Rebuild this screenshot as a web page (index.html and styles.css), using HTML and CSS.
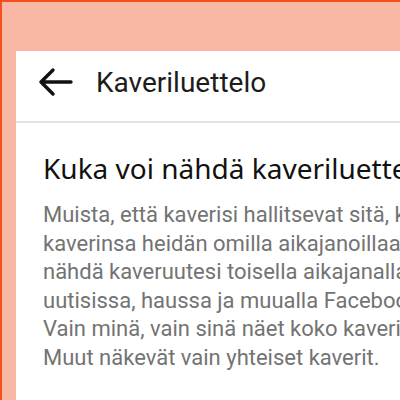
FILE: index.html
```html
<!DOCTYPE html>
<html lang="fi">
<head>
<meta charset="utf-8">
<link rel="stylesheet" href="styles.css">
</head>
<body>
<div class="frame">
  <div class="panel">
    <div class="topbar">
      <svg class="back" width="36" height="30" viewBox="0 0 36 30">
        <path d="M34 15 H4 M16 3 L4 15 L16 27" fill="none" stroke="#111" stroke-width="3.4" stroke-linecap="round" stroke-linejoin="round"/>
      </svg>
      <span class="title">Kaveriluettelo</span>
    </div>
    <div class="content">
      <h1 class="heading">Kuka voi nähdä kaveriluettelosi?</h1>
      <p class="body-text">
        <span class="line">Muista, että kaverisi hallitsevat sitä, ketkä näkevät</span>
        <span class="line">kaverinsa heidän omilla aikajanoillaan. Jos ihmiset voivat</span>
        <span class="line">nähdä kaveruutesi toisella aikajanalla, he voivat nähdä sen</span>
        <span class="line">uutisissa, haussa ja muualla Facebookissa. Jos valitset</span>
        <span class="line">Vain minä, vain sinä näet koko kaverilistasi aikajanallasi.</span>
        <span class="line">Muut näkevät vain yhteiset kaverit.</span>
      </p>
    </div>
  </div>
</div>
</body>
</html>
```

FILE: styles.css
```css
html, body {
  margin: 0;
  padding: 0;
  width: 400px;
  height: 400px;
  overflow: hidden;
}
body {
  background: #f9b8a5;
}
.frame {
  width: 400px;
  height: 400px;
  box-sizing: border-box;
  border-top: 2px solid #f4511e;
  border-left: 2px solid #f4511e;
  padding: 49px 0 0 14px;
  overflow: hidden;
}
.panel {
  width: 600px;
  height: 400px;
  background: #ffffff;
}
.topbar {
  height: 70px;
  display: flex;
  align-items: center;
  padding-left: 21px;
  border-bottom: 2px solid #e4e4e4;
  box-sizing: content-box;
}
.back {
  display: block;
  margin-top: -8px;
}
.title {
  margin-left: 23px;
  margin-top: -8px;
  font-family: Roboto, "Liberation Sans", sans-serif;
  font-size: 28px;
  color: #1c1c1c;
}
.content {
  padding: 26px 0 0 27px;
}
.heading {
  margin: 0;
  font-family: "Noto Sans", "Open Sans", sans-serif;
  font-weight: 400;
  font-size: 28px;
  line-height: 38px;
  color: #111111;
  white-space: nowrap;
}
.body-text {
  margin: 14px 0 0 0;
  font-family: Roboto, "Liberation Sans", sans-serif;
  font-size: 22px;
  line-height: 28.6px;
  color: #737373;
}
.line {
  display: block;
  white-space: nowrap;
}
```
